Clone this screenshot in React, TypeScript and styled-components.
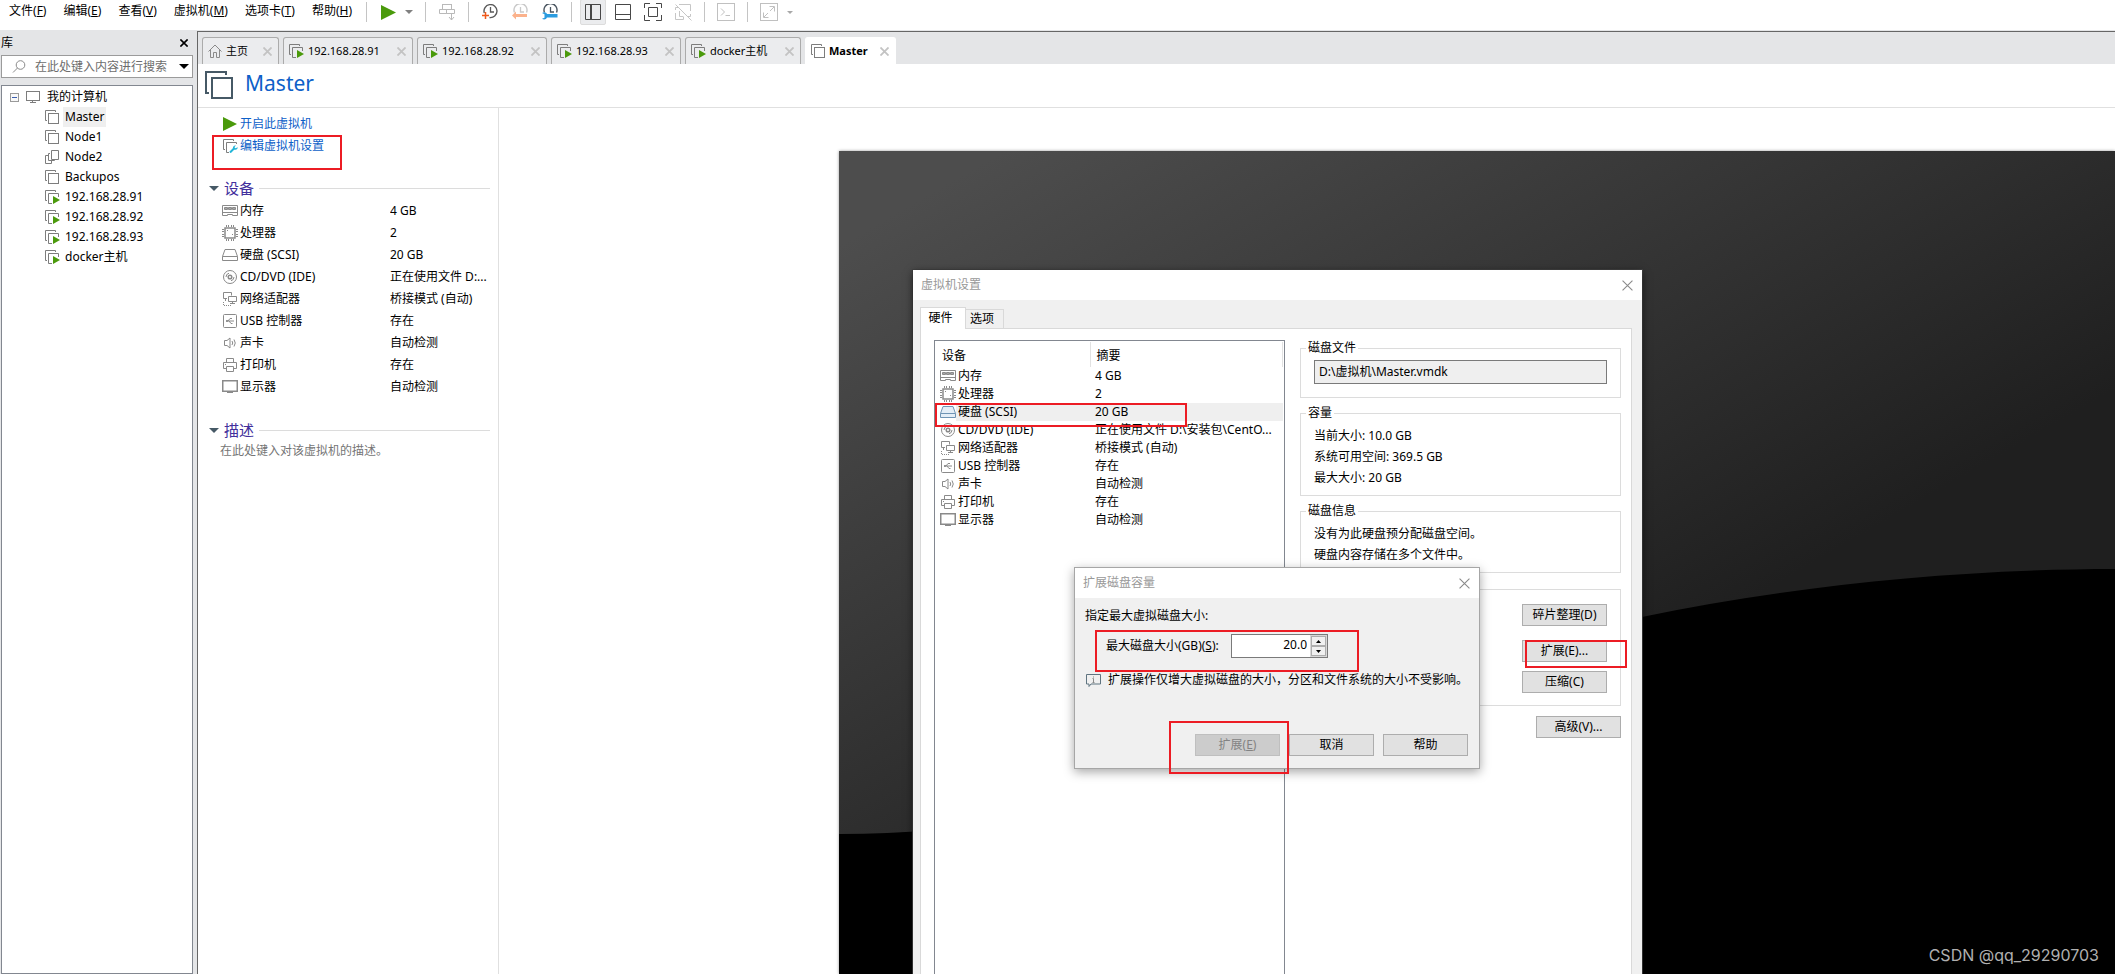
import React from "react";
import styled, { createGlobalStyle, css } from "styled-components";

const GlobalStyle = createGlobalStyle`
  * { box-sizing: border-box; }
  body {
    margin: 0;
    background: #fff;
    color: #000;
    font: 12px/20px "Noto Sans", "Noto Sans CJK SC", sans-serif;
  }
  button, input { font: inherit; color: inherit; }
  button { padding: 0; border: 0; background: none; }
  svg { display: block; flex: none; }
`;

/* ---------- icons ---------- */

type IconProps = { size?: number; color?: string };

const VmIcon = ({ size = 14, color = "#7d7d7d" }: IconProps) => (
  <svg width={size} height={size} viewBox="0 0 14 14" fill="none" stroke={color}>
    <path d="M2 10.5H.5V.5h10V2" />
    <rect x="3.5" y="3.5" width="10" height="10" />
  </svg>
);

const VmLargeIcon = () => (
  <svg width="28" height="28" viewBox="0 0 28 28" fill="none" stroke="#465966" strokeWidth="2">
    <path d="M4 22H1V1h20v3" />
    <rect x="7" y="7" width="20" height="20" />
  </svg>
);

const VmRunningIcon = () => (
  <svg width="15" height="14" viewBox="0 0 15 14" fill="none" stroke="#7d7d7d">
    <path d="M2 10.5H.5V.5h10V2M7 13.5H3.5v-10h10V7" />
    <path d="M8 6l7 4-7 4z" fill="#4a9a0b" stroke="none" />
  </svg>
);

const VmCloneIcon = () => (
  <svg width="14" height="14" viewBox="0 0 14 14" fill="none" stroke="#7d7d7d">
    <path d="M6.5.5h7v9h-7zM5 3.5H3.5v7h6V10M3 5.500H.5v8h6V11" />
  </svg>
);

const VmSettingsIcon = () => (
  <svg width="15" height="14" viewBox="0 0 15 14" fill="none" stroke="#7d7d7d">
    <path d="M2 10.5H.5V.5h10V2M6 13.5H3.5v-10h10V5" />
    <path d="M7 13.5l4-4" stroke="#22b5d8" strokeWidth="2" />
    <path d="M13 6.5l-1.5 1.5.5 1 1 .3 1.500-1.300c.5 2-1 3.200-3 2.700L10 9.500C9.500 7.500 11 6 13 6.500z" fill="#22b5d8" stroke="none" />
  </svg>
);

const PlayIcon = ({ size = 15 }: IconProps) => (
  <svg width={size} height={size} viewBox="0 0 15 15">
    <path d="M0 0l15 7.500L0 15z" fill="#4a9a0b" />
  </svg>
);

const CaretIcon = ({ size = 8, color = "#808080" }: IconProps) => (
  <svg width={size} height={size / 2} viewBox="0 0 8 4">
    <path d="M0 0h8L4 4z" fill={color} />
  </svg>
);

const CrossIcon = ({ size = 9, color = "#c3c3c3", weight = 2 }: IconProps & { weight?: number }) => (
  <svg width={size} height={size} viewBox="0 0 10 10" stroke={color} strokeWidth={weight}>
    <path d="M.5.5l9 9M9.5.5l-9 9" />
  </svg>
);

const HomeIcon = () => (
  <svg width="14" height="14" viewBox="0 0 14 14" fill="none" stroke="#8a8a8a">
    <path d="M.5 7.5L7 1l6.500 6.500M2.500 6v7.500h3v-5h3v5h3V6" />
  </svg>
);

const SearchIcon = () => (
  <svg width="14" height="13" viewBox="0 0 14 13" fill="none" stroke="#8a8a8a">
    <circle cx="8.5" cy="5" r="4.3" />
    <path d="M5.5 8L1 12.5" />
  </svg>
);

const ComputerIcon = () => (
  <svg width="14" height="12" viewBox="0 0 14 12" fill="none" stroke="#7d7d7d">
    <rect x=".5" y=".5" width="13" height="9" />
    <path d="M4 11.5h6M6.5 10v1" />
  </svg>
);

const CollapseIcon = () => (
  <svg width="9" height="9" viewBox="0 0 9 9" fill="#f8f8f8" stroke="#9a9a9a">
    <rect x=".5" y=".5" width="8" height="8" />
    <path d="M2 4.5h5" stroke="#3b5fb0" />
  </svg>
);

const SendKeysIcon = () => (
  <svg width="17" height="17" viewBox="0 0 17 17" fill="none" stroke="#b9b9b9">
    <rect x="3.5" y=".5" width="9" height="5" />
    <path d="M.5 5.5h7v4h-7zM7.5 5.5h8v4h-8zM12.5 10v6M10 13l2.500 3 2.500-3" />
  </svg>
);

type ClockProps = { color: string; mark: "plus" | "back" | "wrench" };
const SnapshotIcon = ({ color, mark }: ClockProps) => (
  <svg width="16" height="16" viewBox="0 0 16 16" fill="none">
    <path
      d={mark === "plus" ? "M2.300 9A6.500 6.500 0 1 1 7.500 13.500" : "M2.500 8.500a6.500 6.500 0 1 1 12 0"}
      stroke={color}
      strokeWidth="1.4"
    />
    <path d="M8.5 3v5H12" stroke={color} strokeWidth="1.3" />
    {mark === "plus" && <path d="M0 11.5h7M3.5 8v7" stroke="#f0591b" strokeWidth="1.5" />}
    {mark === "back" && <path d="M0 11.5l4-4V10h11v3H4v2.500z" fill="#fbb28c" />}
    {mark === "wrench" && (
      <path
        d="M0 9c2-1.500 4.500-.8 5 1h10.500v3.500H5c-.8 2-3.200 2.500-5 1.200l2.500-1v-3.400z"
        fill="#2b9ce0"
      />
    )}
  </svg>
);

const LayoutIcon = ({ kind }: { kind: "side" | "bottom" | "frame" | "off" }) => (
  <svg width="18" height="18" viewBox="0 0 18 18" fill="none" stroke={kind === "off" ? "#c6c6c6" : "#484848"}>
    {kind === "side" && <path d="M1.5 1.5h15v15h-15zM6.500 2v14M7.500 2v14" />}
    {kind === "bottom" && <path d="M1.5 1.5h15v15h-15zM2 11.500h14" />}
    {kind === "frame" && (
      <path d="M.5 5V.5H6M12 .5h5.500V5M17.500 12v5.500H12M6 17.500H.5V12M4.500 4.500h9v9h-9z" />
    )}
    {kind === "off" && (
      <path d="M1.5 7V4.500H4M1.500 10v6.500h8v-3M5 1.500h11.500V8M16.500 11v2.500H14M1.500 1.500l16 16M5.500 8v5.500H9" />
    )}
  </svg>
);

const TerminalIcon = () => (
  <svg width="18" height="18" viewBox="0 0 18 18" fill="none" stroke="#c0c0c0">
    <rect x=".5" y=".5" width="17" height="17" />
    <path d="M4 5.5L7.500 9 4 12.500M8.500 12.500H13" />
  </svg>
);

const FullscreenIcon = () => (
  <svg width="18" height="18" viewBox="0 0 18 18" fill="none" stroke="#c0c0c0">
    <rect x=".5" y=".5" width="17" height="17" />
    <path d="M3.500 9.500v5h5M4 14l4-4M9.500 3.500h5v5M14 4l-4 4" />
  </svg>
);

const InfoIcon = () => (
  <svg width="15" height="13" viewBox="0 0 15 13" fill="none" stroke="#5f7480">
    <path d="M.5.5h14V10H5l-2 2.500V10H.5z" />
    <path d="M7.500 4.500v4M7.500 2.500v1M6.500 4.500h1M6.500 8.500h2" stroke="#8a8a8a" />
  </svg>
);

type DeviceKind = "memory" | "cpu" | "disk" | "cd" | "net" | "usb" | "sound" | "printer" | "display";

const DeviceIcon = ({ kind, active }: { kind: DeviceKind; active?: boolean }) => (
  <svg width="16" height="16" viewBox="0 0 16 16" fill="none" stroke={active ? "#6f94b4" : "#8a8a8a"}>
    {kind === "memory" && (
      <>
        <path d="M.5 2.500h15v10h-5v-1h-5v1h-5zM.5 9.500h15" />
        <path d="M2.500 4.500h3v2h-3zM6.500 4.500h3v2h-3zM10.500 4.500h3v2h-3z" fill="#a5a5a5" />
      </>
    )}
    {kind === "cpu" && (
      <>
        <rect x="3" y="3" width="10" height="10" strokeWidth="1.5" />
        <path d="M4.500 0v2M6.500 0v2M9.500 0v2M11.500 0v2M4.500 14v2M6.500 14v2M9.500 14v2M11.500 14v2M0 4.500h2M0 6.500h2M0 9.500h2M0 11.500h2M14 4.500h2M14 6.500h2M14 9.500h2M14 11.500h2" />
        <path d="M5 5.500h1M10 9.500h1" />
      </>
    )}
    {kind === "disk" && (
      <>
        <path d="M.5 9.500L3 2.500h10l2.500 7v4H.5z" fill={active ? "#e4eef7" : "none"} />
        <path d="M.5 9.500h15" />
      </>
    )}
    {kind === "cd" && (
      <>
        <circle cx="8" cy="8" r="6.5" />
        <circle cx="8" cy="8" r="1.8" strokeWidth="1.5" />
        <path d="M4 8a4 4 0 0 1 3-3.800M12 8a4 4 0 0 1-3 3.800" />
      </>
    )}
    {kind === "net" && (
      <>
        <path d="M5 7.500H1.500v-6h8v3M3.500 8v2" />
        <path d="M6.500 5.500h8v5h-8zM8 12.500h5M10.500 11v2" />
        <path d="M1.500 11v3.500h8" strokeDasharray="1 1" />
      </>
    )}
    {kind === "usb" && (
      <>
        <rect x="1.5" y="1.5" width="13" height="13" rx="1" />
        <path d="M4 8h8M6 8l2-2.500h2M7 8l2 2.500h1.500" />
        <circle cx="5" cy="8" r="1" fill="#838383" stroke="none" />
      </>
    )}
    {kind === "sound" && (
      <>
        <path d="M2.500 5.500H5L8 3v10l-3-2.500H2.500z" />
        <path d="M10 6q1.500 2 0 4M12 4.500q2.500 3.500 0 7" />
      </>
    )}
    {kind === "printer" && (
      <>
        <path d="M4.500 5.500v-4h7v4M4 11.500H1.500v-6h13v6H12" />
        <path d="M4.500 9.500h7v5h-7zM3 7.500h1" />
      </>
    )}
    {kind === "display" && (
      <>
        <rect x=".75" y="1.75" width="14.5" height="10.5" strokeWidth="1.5" />
        <path d="M5 13.500h6" />
      </>
    )}
  </svg>
);

/* ---------- shell ---------- */

const Shell = styled.div`
  position: relative;
  display: flex;
  flex-direction: column;
  height: 100vh;
  overflow: hidden;
`;

const MenuBar = styled.header`
  display: flex;
  align-items: flex-start;
  flex: none;
  height: 30px;
  padding-left: 9px;
`;

const Menu = styled.nav`
  display: flex;
  gap: 17px;
  width: 357px;
  padding-top: 1px;
`;

const MenuItem = styled.button`
  white-space: nowrap;
  height: 20px;
`;

const Toolbar = styled.div`
  display: flex;
  align-items: center;
  height: 24px;
`;

const ToolGroup = styled.div`
  display: flex;
  align-items: center;
  padding-right: 6px;
  &::before {
    width: 1px;
    height: 20px;
    margin-right: 6px;
    background: #c4c4c4;
    content: "";
  }
`;

const ToolButton = styled.button<{ $pressed?: boolean }>`
  display: flex;
  align-items: center;
  justify-content: center;
  width: 30px;
  height: 26px;
  ${(p) =>
    p.$pressed &&
    css`
      width: 26px;
      margin: 0 2px;
      border: 1px solid #dcdcdc;
      border-radius: 2px;
      background: #ebecee;
    `}
`;

const ToolMenuButton = styled(ToolButton)`
  width: 16px;
  padding-right: 4px;
`;

const Workspace = styled.div`
  display: flex;
  flex: 1;
  gap: 3px;
  min-height: 0;
  padding-top: 1px;
  background: #e4e5e7;
`;

/* ---------- library ---------- */

const Library = styled.aside`
  display: flex;
  flex-direction: column;
  flex: none;
  width: 194px;
  padding: 0 1px;
`;

const LibraryTitle = styled.div`
  display: flex;
  align-items: center;
  justify-content: space-between;
  height: 24px;
  padding-right: 5px;
`;

const IconButton = styled.button`
  display: flex;
  align-items: center;
  justify-content: center;
`;

const SearchBox = styled.div`
  display: flex;
  align-items: center;
  gap: 9px;
  height: 23px;
  margin-bottom: 7px;
  padding: 0 3px 0 10px;
  border: 1px solid #9b9b9b;
  background: #fff;
`;

const SearchInput = styled.input`
  flex: 1;
  min-width: 0;
  padding: 0;
  border: 0;
  outline: 0;
  background: none;
  &::placeholder { color: #6d6d6d; opacity: 1; }
`;

const Tree = styled.ul`
  flex: 1;
  margin: 0;
  padding: 1px 0 0;
  list-style: none;
  border: 1px solid #828790;
  background: #fff;
`;

const TreeRow = styled.li<{ $root?: boolean }>`
  display: flex;
  align-items: center;
  gap: ${(p) => (p.$root ? 7 : 4)}px;
  height: 20px;
  padding-left: ${(p) => (p.$root ? 8 : 43)}px;
`;

const TreeSlot = styled.span`
  width: 14px;
`;

const TreeLabel = styled.span<{ $selected?: boolean }>`
  padding: 0 2px;
  background: ${(p) => (p.$selected ? "#efefef" : "none")};
`;

/* ---------- main ---------- */

const Main = styled.main`
  display: flex;
  flex: 1;
  flex-direction: column;
  min-width: 0;
  border: solid #666;
  border-width: 1px 0 0 1px;
`;

const TabStrip = styled.div`
  display: flex;
  align-items: flex-end;
  gap: 4px;
  flex: none;
  height: 32px;
  padding-left: 4px;
`;

const Tab = styled.div<{ $width: number; $active?: boolean }>`
  display: flex;
  align-items: center;
  justify-content: space-between;
  width: ${(p) => p.$width}px;
  height: 27px;
  padding: 0 6px 0 5px;
  border: 1px solid #ababab;
  border-bottom: 0;
  border-radius: 3px 3px 0 0;
  background: #ebecee;
  ${(p) =>
    p.$active &&
    css`
      border-color: #fff;
      background: #fff;
      font-weight: 700;
    `}
`;

const TabLabel = styled.button`
  display: flex;
  align-items: center;
  gap: 4px;
  font-size: 11px;
  white-space: nowrap;
`;

const VmHeader = styled.div`
  display: flex;
  align-items: center;
  gap: 12px;
  flex: none;
  height: 44px;
  padding: 0 0 1px 7px;
  border-bottom: 1px solid #e0e0e0;
  background: #fff;
`;

const VmName = styled.h1`
  margin: 0;
  padding-bottom: 4px;
  color: #0d60c8;
  font-size: 21px;
  font-weight: 400;
  line-height: 28px;
`;

const VmBody = styled.div`
  display: flex;
  flex: 1;
  min-height: 0;
  background: #fff;
`;

const Summary = styled.section`
  flex: none;
  width: 301px;
  padding: 5px 8px 0 11px;
  border-right: 1px solid #e0e0e0;
`;

const ActionRow = styled.div`
  position: relative;
  display: flex;
  align-items: center;
  gap: 2px;
  height: 22px;
  padding-left: 14px;
`;

const ActionIcon = styled.span`
  display: flex;
  width: 15px;
`;

const ActionLink = styled.a`
  color: #0d60c8;
  text-decoration: none;
`;

const SectionTitle = styled.h2`
  display: flex;
  align-items: center;
  gap: 5px;
  height: 22px;
  margin: 20px 0 0;
  color: #42309c;
  font-size: 15px;
  font-weight: 400;
  &::after {
    flex: 1;
    height: 1px;
    background: #dcdcdc;
    content: "";
  }
`;

const Description = styled.p`
  margin: 0;
  padding-left: 11px;
  color: #757575;
  line-height: 20px;
`;

const DeviceTable = styled.table<{ $row: number; $name: number; $indent: number }>`
  width: 100%;
  table-layout: fixed;
  border-collapse: collapse;
  line-height: 18px;
  tr { height: ${(p) => p.$row}px; }
  th { padding: 0; font-weight: 400; text-align: left; }
  th:first-child, td:first-child { width: ${(p) => p.$name}px; padding: 0 0 0 ${(p) => p.$indent}px; }
  td { overflow: hidden; padding: 0; white-space: nowrap; text-overflow: ellipsis; }
`;

const SectionBody = styled.div`
  padding: 1px 0;
`;

const DeviceName = styled.span<{ $selected?: boolean }>`
  display: flex;
  align-items: center;
  height: 18px;
  span {
    flex: 1;
    padding-left: 2px;
    background: ${(p) => (p.$selected ? "#efefef" : "none")};
  }
`;

const Preview = styled.div`
  flex: 1;
  min-width: 0;
  margin: 43px 0 0 340px;
  box-shadow: 0 0 3px #999;
  svg { width: 100%; height: 100%; background: #000; }
`;

const Watermark = styled.span`
  position: absolute;
  right: 16px;
  bottom: 9px;
  color: #b0b0b0;
  font-family: Inter, sans-serif;
  font-size: 16px;
`;

/* Red frame drawn over the control that a step refers to. */
const Callout = styled.i<{ $box: [number, number, number, number] }>`
  position: absolute;
  z-index: 1;
  left: ${(p) => p.$box[0]}px;
  top: ${(p) => p.$box[1]}px;
  width: ${(p) => p.$box[2]}px;
  height: ${(p) => p.$box[3]}px;
  border: 2px solid #ec1c24;
  pointer-events: none;
`;

/* ---------- dialogs ---------- */

const Dialog = styled.section`
  position: absolute;
  display: flex;
  flex-direction: column;
  background: #f0f0f0;
`;

const SettingsDialog = styled(Dialog)`
  left: 913px;
  top: 270px;
  bottom: -20px;
  width: 729px;
  box-shadow: 0 2px 8px rgba(0, 0, 0, 0.6), 0 0 0 1px #444;
`;

const ExpandDialog = styled(Dialog)`
  left: 1074px;
  top: 567px;
  width: 406px;
  border: 1px solid #a6a6a6;
  box-shadow: 0 3px 10px rgba(0, 0, 0, 0.35);
`;

const DialogTitle = styled.header`
  display: flex;
  align-items: center;
  justify-content: space-between;
  flex: none;
  height: 30px;
  padding: 0 9px 0 8px;
  background: #fff;
  color: #999;
`;

const PageTabs = styled.div`
  display: flex;
  align-items: flex-end;
  flex: none;
  height: 28px;
  padding-left: 7px;
`;

const PageTab = styled.button<{ $active?: boolean }>`
  width: 38px;
  height: 19px;
  padding-right: 5px;
  border: 1px solid #d9d9d9;
  border-width: 1px 1px 0 0;
  line-height: 18px;
  ${(p) =>
    p.$active &&
    css`
      z-index: 1;
      width: 46px;
      height: 22px;
      margin-bottom: -1px;
      padding-bottom: 1px;
      border-left-width: 1px;
      background: #fff;
    `}
`;

const Page = styled.div`
  display: flex;
  flex: 1;
  gap: 15px;
  margin: 0 10px 0 7px;
  padding: 11px 10px 0 13px;
  border: 1px solid #d9d9d9;
  background: #fff;
`;

const DeviceList = styled.div`
  position: relative;
  width: 351px;
  padding: 1px;
  border: 1px solid #828790;
`;

const ListHead = styled.tr`
  && { height: 25px; }
  && th { padding-top: 2px; }
  && th:first-child { padding-left: 6px; }
  th { border-right: 1px solid #e2e2e2; }
  th + th { padding-left: 6px; }
`;

const ListRow = styled.tr<{ $selected?: boolean }>`
  td + td {
    padding: 0 4px 0 5px;
    background: ${(p) => (p.$selected ? "#efefef" : "none")};
  }
`;

const Groups = styled.div`
  flex: 1;
  min-width: 0;
`;

const Group = styled.fieldset`
  min-width: 0;
  margin: 0 0 7px;
  padding: 0 5px 7px;
  border: 1px solid #dcdcdc;
`;

const Legend = styled.legend`
  height: 16px;
  padding: 0 2px;
  line-height: 16px;
`;

const GroupText = styled.div`
  padding: 4px 8px 0;
  line-height: 21px;
`;

const PathInput = styled.input`
  display: block;
  width: calc(100% - 16px);
  height: 24px;
  margin: 4px 8px 6px;
  padding: 0 4px 2px;
  border: 1px solid #7a7a7a;
  outline: 0;
  background: #efefef;
`;

const UtilityGroup = styled(Group)`
  display: flex;
  flex-direction: column;
  align-items: flex-end;
  gap: 9px;
  margin: 16px 0 10px;
  padding: 14px 13px 12px;
`;

const PushButton = styled.button<{ $spaced?: boolean }>`
  width: 85px;
  height: 22px;
  margin-bottom: ${(p) => (p.$spaced ? 5 : 0)}px;
  border: 1px solid #adadad;
  background: #e1e1e1;
  line-height: 20px;
  &:disabled {
    border-color: #bfbfbf;
    background: #ccc;
    color: #838383;
  }
`;

const Anchor = styled.div`
  position: relative;
  display: flex;
`;

const AdvancedRow = styled.div`
  display: flex;
  justify-content: flex-end;
`;

const ExpandBody = styled.div`
  padding: 10px 11px 12px 10px;
  line-height: 16px;
`;

const SizeRow = styled.div`
  position: relative;
  display: flex;
  align-items: center;
  justify-content: space-between;
  width: 243px;
  margin: 10px 0 14px;
  padding-left: 21px;
`;

const Spinner = styled.span`
  display: flex;
  width: 97px;
  height: 24px;
  border: 1px solid #7a7a7a;
  background: #fff;
`;

const SizeInput = styled.input`
  flex: 1;
  min-width: 0;
  padding: 0 3px 3px;
  border: 0;
  outline: 0;
  background: none;
  text-align: right;
`;

const SpinButtons = styled.span`
  display: flex;
  flex-direction: column;
  width: 17px;
  padding: 1px;
  background: #d8d8d8;
`;

const SpinButton = styled.button`
  display: flex;
  flex: 1;
  align-items: center;
  justify-content: center;
  border: 1px solid #adadad;
  background: #f0f0f0;
`;

const InfoRow = styled.p`
  display: flex;
  align-items: center;
  gap: 7px;
  margin: 0;
  padding-left: 1px;
  white-space: nowrap;
`;

const Footer = styled.div`
  position: relative;
  display: flex;
  justify-content: flex-end;
  gap: 9px;
  margin-top: 46px;
`;

/* ---------- data ---------- */

const menus = [
  ["文件", "F"],
  ["编辑", "E"],
  ["查看", "V"],
  ["虚拟机", "M"],
  ["选项卡", "T"],
  ["帮助", "H"],
];

const machines: { name: string; state?: "running" | "clone"; selected?: boolean }[] = [
  { name: "Master", selected: true },
  { name: "Node1" },
  { name: "Node2", state: "clone" },
  { name: "Backupos" },
  { name: "192.168.28.91", state: "running" },
  { name: "192.168.28.92", state: "running" },
  { name: "192.168.28.93", state: "running" },
  { name: "docker主机", state: "running" },
];

const tabs = [
  { name: "主页", width: 77, icon: <HomeIcon /> },
  { name: "192.168.28.91", width: 130, icon: <VmRunningIcon /> },
  { name: "192.168.28.92", width: 130, icon: <VmRunningIcon /> },
  { name: "192.168.28.93", width: 130, icon: <VmRunningIcon /> },
  { name: "docker主机", width: 116, icon: <VmRunningIcon /> },
  { name: "Master", width: 91, icon: <VmIcon />, active: true },
];

const devices: { kind: DeviceKind; name: string; value: string; detail?: string }[] = [
  { kind: "memory", name: "内存", value: "4 GB" },
  { kind: "cpu", name: "处理器", value: "2" },
  { kind: "disk", name: "硬盘 (SCSI)", value: "20 GB" },
  { kind: "cd", name: "CD/DVD (IDE)", value: "正在使用文件 D:...", detail: "正在使用文件 D:\\安装包\\CentO..." },
  { kind: "net", name: "网络适配器", value: "桥接模式 (自动)" },
  { kind: "usb", name: "USB 控制器", value: "存在" },
  { kind: "sound", name: "声卡", value: "自动检测" },
  { kind: "printer", name: "打印机", value: "存在" },
  { kind: "display", name: "显示器", value: "自动检测" },
];

/* ---------- views ---------- */

const TopBar = () => (
  <MenuBar>
    <Menu>
      {menus.map(([label, key]) => (
        <MenuItem key={key}>
          {label}(<u>{key}</u>)
        </MenuItem>
      ))}
    </Menu>
    <Toolbar>
      <ToolGroup>
        <ToolButton aria-label="开机"><PlayIcon /></ToolButton>
        <ToolMenuButton aria-label="电源选项"><CaretIcon /></ToolMenuButton>
      </ToolGroup>
      <ToolGroup>
        <ToolButton aria-label="发送按键"><SendKeysIcon /></ToolButton>
      </ToolGroup>
      <ToolGroup>
        <ToolButton aria-label="拍摄快照"><SnapshotIcon color="#5a5a5a" mark="plus" /></ToolButton>
        <ToolButton aria-label="恢复快照"><SnapshotIcon color="#c9c9c9" mark="back" /></ToolButton>
        <ToolButton aria-label="管理快照"><SnapshotIcon color="#4a5560" mark="wrench" /></ToolButton>
      </ToolGroup>
      <ToolGroup>
        <ToolButton $pressed aria-label="显示库"><LayoutIcon kind="side" /></ToolButton>
        <ToolButton aria-label="缩略图栏"><LayoutIcon kind="bottom" /></ToolButton>
        <ToolButton aria-label="独占模式"><LayoutIcon kind="frame" /></ToolButton>
        <ToolButton aria-label="Unity"><LayoutIcon kind="off" /></ToolButton>
      </ToolGroup>
      <ToolGroup>
        <ToolButton aria-label="控制台"><TerminalIcon /></ToolButton>
      </ToolGroup>
      <ToolGroup>
        <ToolButton aria-label="全屏"><FullscreenIcon /></ToolButton>
        <ToolMenuButton aria-label="全屏选项"><CaretIcon size={6} color="#a8a8a8" /></ToolMenuButton>
      </ToolGroup>
    </Toolbar>
  </MenuBar>
);

const LibraryPanel = () => (
  <Library>
    <LibraryTitle>
      库
      <IconButton aria-label="关闭库"><CrossIcon size={8} color="#000" /></IconButton>
    </LibraryTitle>
    <SearchBox>
      <SearchIcon />
      <SearchInput aria-label="搜索" placeholder="在此处键入内容进行搜索" />
      <IconButton aria-label="搜索选项"><CaretIcon size={10} color="#000" /></IconButton>
    </SearchBox>
    <Tree>
      <TreeRow $root>
        <CollapseIcon />
        <TreeSlot><ComputerIcon /></TreeSlot>
        <span>我的计算机</span>
      </TreeRow>
      {machines.map((m) => (
        <TreeRow key={m.name}>
          <TreeSlot>
            {m.state === "running" ? <VmRunningIcon /> : m.state === "clone" ? <VmCloneIcon /> : <VmIcon />}
          </TreeSlot>
          <TreeLabel $selected={m.selected}>{m.name}</TreeLabel>
        </TreeRow>
      ))}
    </Tree>
  </Library>
);

const SummaryPanel = () => (
  <Summary>
    <ActionRow>
      <ActionIcon><PlayIcon size={14} /></ActionIcon>
      <ActionLink href="#start">开启此虚拟机</ActionLink>
    </ActionRow>
    <ActionRow>
      <ActionIcon><VmSettingsIcon /></ActionIcon>
      <ActionLink href="#settings">编辑虚拟机设置</ActionLink>
      <Callout $box={[3, 0, 130, 35]} />
    </ActionRow>
    <SectionTitle><CaretIcon size={10} color="#465966" />设备</SectionTitle>
    <SectionBody>
      <DeviceTable $row={22} $name={181} $indent={13}>
        <tbody>
          {devices.map((d) => (
            <tr key={d.kind}>
              <td><DeviceName><DeviceIcon kind={d.kind} /><span>{d.name}</span></DeviceName></td>
              <td>{d.value}</td>
            </tr>
          ))}
        </tbody>
      </DeviceTable>
    </SectionBody>
    <SectionTitle><CaretIcon size={10} color="#465966" />描述</SectionTitle>
    <Description>在此处键入对该虚拟机的描述。</Description>
  </Summary>
);

const ScreenPreview = () => (
  <Preview>
    <svg viewBox="0 0 1276 823" preserveAspectRatio="xMinYMin slice">
      <defs>
        <linearGradient id="sheen" gradientUnits="userSpaceOnUse" x1="60" y1="60" x2="440" y2="720">
          <stop offset="0" stopColor="#4d4d4d" />
          <stop offset="1" stopColor="#1f1f1f" />
        </linearGradient>
      </defs>
      <path
        d="M0 0H1276V418C1120 418 950 435 803 466C500 530 350 683 0 683Z"
        fill="url(#sheen)"
      />
    </svg>
  </Preview>
);

const Settings = () => (
  <SettingsDialog role="dialog" aria-label="虚拟机设置">
    <DialogTitle>
      虚拟机设置
      <IconButton aria-label="关闭"><CrossIcon size={11} color="#8a8a8a" weight={1} /></IconButton>
    </DialogTitle>
    <PageTabs>
      <PageTab $active>硬件</PageTab>
      <PageTab>选项</PageTab>
    </PageTabs>
    <Page>
      <DeviceList>
        <DeviceTable $row={18} $name={154} $indent={4}>
          <thead>
            <ListHead><th>设备</th><th>摘要</th></ListHead>
          </thead>
          <tbody>
            {devices.map((d) => {
              const selected = d.kind === "disk";
              return (
                <ListRow key={d.kind} $selected={selected}>
                  <td>
                    <DeviceName $selected={selected}>
                      <DeviceIcon kind={d.kind} active={selected} />
                      <span>{d.name}</span>
                    </DeviceName>
                  </td>
                  <td>{d.detail ?? d.value}</td>
                </ListRow>
              );
            })}
          </tbody>
        </DeviceTable>
        <Callout $box={[0, 62, 252, 24]} />
      </DeviceList>
      <Groups>
        <Group>
          <Legend>磁盘文件</Legend>
          <PathInput aria-label="磁盘文件" readOnly value={"D:\\虚拟机\\Master.vmdk"} />
        </Group>
        <Group>
          <Legend>容量</Legend>
          <GroupText>
            <div>当前大小: 10.0 GB</div>
            <div>系统可用空间: 369.5 GB</div>
            <div>最大大小: 20 GB</div>
          </GroupText>
        </Group>
        <Group>
          <Legend>磁盘信息</Legend>
          <GroupText>
            <div>没有为此硬盘预分配磁盘空间。</div>
            <div>硬盘内容存储在多个文件中。</div>
          </GroupText>
        </Group>
        <UtilityGroup>
          <PushButton $spaced>碎片整理(D)</PushButton>
          <Anchor>
            <PushButton>扩展(E)...</PushButton>
            <Callout $box={[3, 0, 102, 28]} />
          </Anchor>
          <PushButton>压缩(C)</PushButton>
        </UtilityGroup>
        <AdvancedRow><PushButton>高级(V)...</PushButton></AdvancedRow>
      </Groups>
    </Page>
  </SettingsDialog>
);

const Expand = () => (
  <ExpandDialog role="dialog" aria-label="扩展磁盘容量">
    <DialogTitle>
      扩展磁盘容量
      <IconButton aria-label="关闭"><CrossIcon size={11} color="#8a8a8a" weight={1} /></IconButton>
    </DialogTitle>
    <ExpandBody>
      <div>指定最大虚拟磁盘大小:</div>
      <SizeRow>
        <label htmlFor="size">最大磁盘大小(GB)(<u>S</u>):</label>
        <Spinner>
          <SizeInput id="size" defaultValue="20.0" />
          <SpinButtons>
            <SpinButton aria-label="增加">
              <svg width="5" height="3" viewBox="0 0 5 3"><path d="M0 3h5L2.500 0z" /></svg>
            </SpinButton>
            <SpinButton aria-label="减少">
              <svg width="5" height="3" viewBox="0 0 5 3"><path d="M0 0h5L2.500 3z" /></svg>
            </SpinButton>
          </SpinButtons>
        </Spinner>
        <Callout $box={[10, -4, 264, 42]} />
      </SizeRow>
      <InfoRow><InfoIcon />扩展操作仅增大虚拟磁盘的大小，分区和文件系统的大小不受影响。</InfoRow>
      <Footer>
        <PushButton disabled>扩展(<u>E</u>)</PushButton>
        <PushButton>取消</PushButton>
        <PushButton>帮助</PushButton>
        <Callout $box={[84, -13, 120, 53]} />
      </Footer>
    </ExpandBody>
  </ExpandDialog>
);

export default function App() {
  return (
    <Shell>
      <GlobalStyle />
      <TopBar />
      <Workspace>
        <LibraryPanel />
        <Main>
          <TabStrip>
            {tabs.map((t) => (
              <Tab key={t.name} $width={t.width} $active={t.active}>
                <TabLabel>{t.icon}{t.name}</TabLabel>
                <IconButton aria-label={`关闭 ${t.name}`}><CrossIcon /></IconButton>
              </Tab>
            ))}
          </TabStrip>
          <VmHeader>
            <VmLargeIcon />
            <VmName>Master</VmName>
          </VmHeader>
          <VmBody>
            <SummaryPanel />
            <ScreenPreview />
          </VmBody>
        </Main>
      </Workspace>
      <Watermark>CSDN @qq_29290703</Watermark>
      <Settings />
      <Expand />
    </Shell>
  );
}
